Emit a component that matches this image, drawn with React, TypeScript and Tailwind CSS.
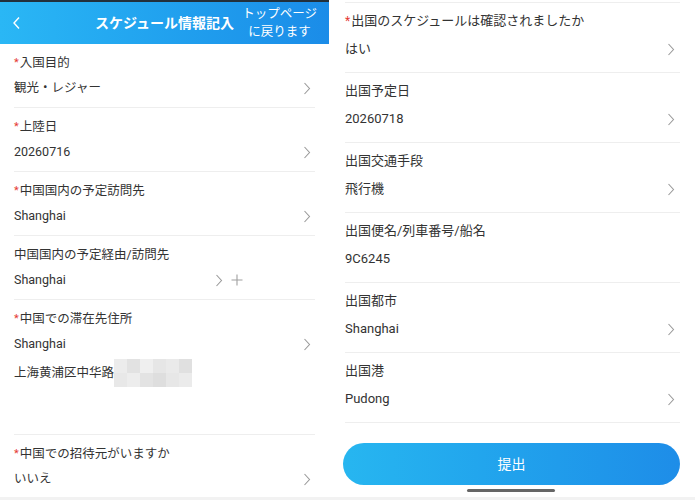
import React from "react";

const font = { fontFamily: 'Roboto, "Noto Sans CJK JP", sans-serif' };

function Chevron({ className = "" }: { className?: string }) {
  return (
    <svg width="8" height="13" viewBox="0 0 8 13" className={className}>
      <polyline points="1.5,1 6.5,6.5 1.5,12" fill="none" stroke="#9a9a9a" strokeWidth="1.1" />
    </svg>
  );
}

function LeftRow({ label, value, req = true, extra }: { label: string; value: string; req?: boolean; extra?: React.ReactNode }) {
  return (
    <div className="shrink-0 border-b border-[#eeeeee] pt-[10px] pb-[10px]">
      <div className="h-[18px] flex items-center text-[12.5px] leading-[18px] text-[#333]">
        {req && <span className="text-[#e53935] text-[11px] mr-[1px]">*</span>}
        <span>{label}</span>
      </div>
      <div className="mt-[7px] h-[18px] flex items-center justify-between text-[12.5px] leading-[18px] text-[#333]">
        <span>{value}</span>
        {extra ?? <Chevron className="mr-[4px]" />}
      </div>
    </div>
  );
}

function RightRow({ label, value, req = false, chevron = true }: { label: string; value: string; req?: boolean; chevron?: boolean }) {
  return (
    <div className="shrink-0 border-t border-[#eeeeee] pt-[8px] pb-[13px]">
      <div className="h-[20px] flex items-center text-[13px] leading-[20px] text-[#333]">
        {req && <span className="text-[#e53935] text-[12px] mr-[1px]">*</span>}
        <span>{label}</span>
      </div>
      <div className="mt-[8px] h-[20px] flex items-center justify-between text-[13px] leading-[20px] text-[#333]">
        <span>{value}</span>
        {chevron && <Chevron className="mr-[5px]" />}
      </div>
    </div>
  );
}

function Mosaic() {
  const cols = ["#ececec", "#e2e2e2", "#efefef", "#e6e6e6", "#eaeaea", "#e0e0e0"];
  const cols2 = ["#e8e8e8", "#ededed", "#e3e3e3", "#dedede", "#e7e7e7", "#ebebeb"];
  return (
    <div className="flex flex-col w-[78px] h-[28px]">
      <div className="flex flex-1">
        {cols.map((c, i) => (
          <div key={i} className="flex-1" style={{ background: c }} />
        ))}
      </div>
      <div className="flex flex-1">
        {cols2.map((c, i) => (
          <div key={i} className="flex-1" style={{ background: c }} />
        ))}
      </div>
    </div>
  );
}

export default function App() {
  return (
    <div className="w-[695px] h-[500px] bg-white flex flex-col overflow-hidden" style={font}>
      <div className="flex flex-1 min-h-0">
        {/* Left panel */}
        <div className="w-[330px] flex flex-col overflow-hidden">
          <div className="shrink-0 h-[2px] bg-[#22303c]" />
          <div className="shrink-0 h-[42px] bg-gradient-to-r from-[#2ab7f5] to-[#1b8ce8] flex items-center text-white relative">
            <svg width="9" height="14" viewBox="0 0 9 14" className="ml-[12px]">
              <polyline points="7,1.5 2,7 7,12.5" fill="none" stroke="#fff" strokeWidth="1.4" />
            </svg>
            <div className="absolute left-0 right-0 text-center text-[14px] font-bold pointer-events-none">
              スケジュール情報記入
            </div>
            <div className="ml-auto mr-[12px] text-[12.5px] leading-[18px] text-center">
              <div>トップページ</div>
              <div>に戻ります</div>
            </div>
          </div>
          <div className="px-[14px] flex flex-col shrink-0">
            <LeftRow label="入国目的" value="観光・レジャー" />
            <LeftRow label="上陸日" value="20260716" />
            <LeftRow label="中国国内の予定訪問先" value="Shanghai" />
            <LeftRow
              label="中国国内の予定経由/訪問先"
              value="Shanghai"
              req={false}
              extra={
                <div className="flex items-center gap-[8px] mr-[72px]">
                  <Chevron />
                  <svg width="12" height="12" viewBox="0 0 12 12">
                    <path d="M6 0.5V11.5M0.5 6H11.5" stroke="#a0a0a0" strokeWidth="1.1" />
                  </svg>
                </div>
              }
            />
            <div className="shrink-0 border-b border-[#eeeeee] pt-[10px] h-[135px]">
              <div className="h-[18px] flex items-center text-[12.5px] leading-[18px] text-[#333]">
                <span className="text-[#e53935] text-[11px] mr-[1px]">*</span>
                <span>中国での滞在先住所</span>
              </div>
              <div className="mt-[7px] h-[18px] flex items-center justify-between text-[12.5px] leading-[18px] text-[#333]">
                <span>Shanghai</span>
                <Chevron className="mr-[4px]" />
              </div>
              <div className="mt-[6px] flex items-center text-[12.5px] leading-[18px] text-[#333]">
                <span>上海黄浦区中华路</span>
                <Mosaic />
              </div>
            </div>
            <LeftRow label="中国での招待元がいますか" value="いいえ" />
          </div>
        </div>
        {/* Right panel */}
        <div className="ml-[3px] flex-1 flex flex-col pl-[13px] pr-[15px] pt-[2px] relative">
          <RightRow label="出国のスケジュールは確認されましたか" value="はい" req />
          <RightRow label="出国予定日" value="20260718" />
          <RightRow label="出国交通手段" value="飛行機" />
          <RightRow label="出国便名/列車番号/船名" value="9C6245" chevron={false} />
          <RightRow label="出国都市" value="Shanghai" />
          <RightRow label="出国港" value="Pudong" />
          <div className="shrink-0 border-t border-[#eeeeee]" />
          <button className="shrink-0 mt-[20px] -ml-[2px] h-[42px] w-[337px] rounded-full bg-gradient-to-r from-[#27b6f0] to-[#1e8de8] text-white text-[14px]">
            提出
          </button>
          <div className="absolute left-[135px] top-[489px] w-[88px] h-[3px] rounded-full bg-[#666]" />
        </div>
      </div>
      <div className="shrink-0 h-[3px] bg-[#f2f2f2]" />
    </div>
  );
}
